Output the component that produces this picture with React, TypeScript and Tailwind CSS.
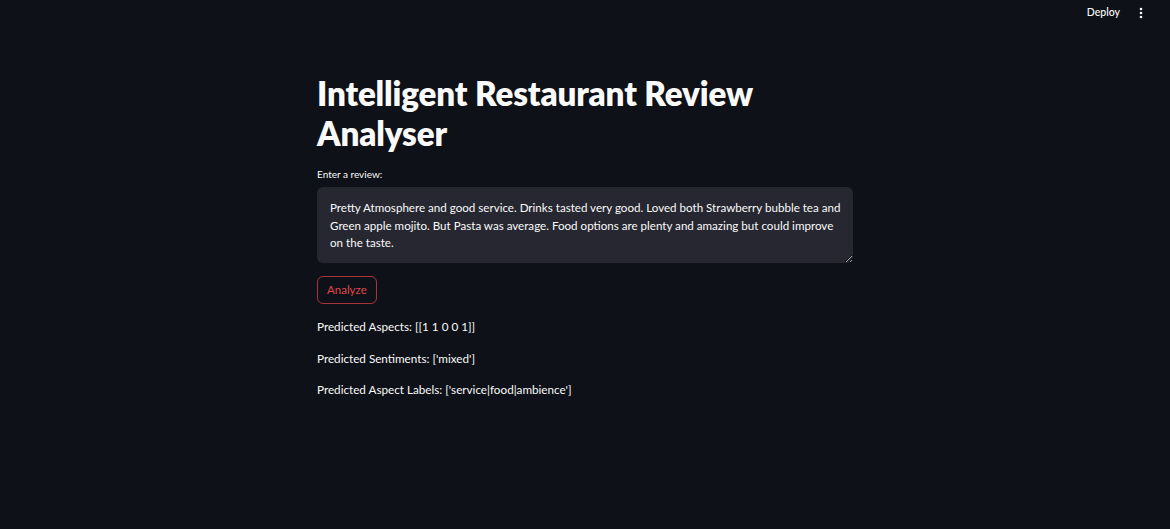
const reviewText =
  "Pretty Atmosphere and good service. Drinks tasted very good. Loved both Strawberry bubble tea and\nGreen apple mojito. But Pasta was average. Food options are plenty and amazing but could improve\non the taste.";

const App = () => {
  return (
    <div
      className="w-full min-h-screen h-[529px] bg-[#0e1117] text-[#fafafa] relative overflow-hidden"
      style={{ fontFamily: "Lato, 'Open Sans', sans-serif" }}
    >
      <header className="h-[25px] flex items-center justify-end pr-[27px] gap-[19px]">
        <span className="text-[10.5px] font-medium text-[#fafafa]">Deploy</span>
        <svg width="4" height="12" viewBox="0 0 4 12" className="text-[#fafafa]">
          <circle cx="2" cy="2" r="1.3" fill="currentColor" />
          <circle cx="2" cy="6" r="1.3" fill="currentColor" />
          <circle cx="2" cy="10" r="1.3" fill="currentColor" />
        </svg>
      </header>

      <main className="w-[536px] ml-[317px] pt-[48px] flex flex-col">
        <h1 className="text-[33.2px] leading-[40px] font-extrabold tracking-[-0.15px]">
          Intelligent Restaurant Review
          <br />
          Analyser
        </h1>

        <label className="mt-[14px] text-[10px] leading-[14px]">Enter a review:</label>

        <textarea
          readOnly
          wrap="off"
          value={reviewText}
          className="mt-[6px] h-[76px] w-full bg-[#262730] rounded-[6px] pl-[13px] pr-[10px] pt-[12px] pb-[8px] text-[11.6px] leading-[17.5px] text-[#fafafa] overflow-hidden resize-y outline-none"
          style={{ fontFamily: "Lato, 'Open Sans', sans-serif" }}
        />

        <div className="mt-[13px]">
          <button className="h-[28px] px-[9px] rounded-[6px] border border-[#a8343a] text-[#e0474c] text-[11.5px] bg-[#0e1117]">
            Analyze
          </button>
        </div>

        <div className="mt-[14px] flex flex-col gap-[14px] text-[11.7px] leading-[17.5px]">
          <p>Predicted Aspects: [[1 1 0 0 1]]</p>
          <p>Predicted Sentiments: ['mixed']</p>
          <p>Predicted Aspect Labels: ['service|food|ambience']</p>
        </div>
      </main>
    </div>
  );
};

export default App;
